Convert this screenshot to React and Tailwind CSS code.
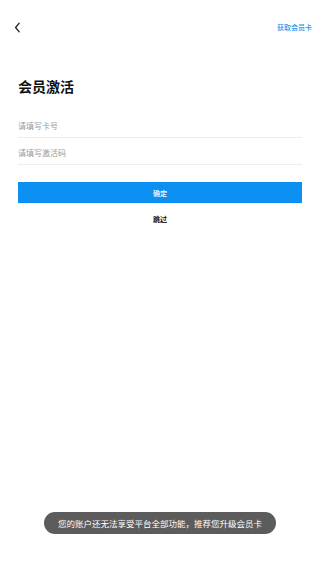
import React from 'react';

const font = { fontFamily: '"Noto Sans CJK SC", "Noto Sans", sans-serif' };

const App = () => {
    const [cardNo, setCardNo] = React.useState("");
    const [code, setCode] = React.useState("");

    return (
        <div className="relative w-full min-h-[569px] bg-white" style={font}>
            {/* Header */}
            <div className="h-[54px] flex items-center justify-between pl-[12px] pr-[8px]">
                <button className="w-[10px] h-[14px] flex items-center justify-center">
                    <svg width="7" height="11" viewBox="0 0 7 11" fill="none">
                        <path d="M5.2 1.2 L1.6 5.5 L5.2 9.8" stroke="#222" strokeWidth="1.3" strokeLinecap="round" strokeLinejoin="round" />
                    </svg>
                </button>
                <span className="text-[7px] leading-[10px] text-[#2b96ee] font-medium">获取会员卡</span>
            </div>

            {/* Form */}
            <div className="px-[18px]">
                <h1 className="mt-[22px] text-[14px] leading-[20px] font-bold text-[#111]">会员激活</h1>

                <div className="mt-[15px] h-[27px] pt-[4px] flex items-center border-b border-[#eeeeee]">
                    <input
                        type="text"
                        value={cardNo}
                        onChange={(e) => setCardNo(e.target.value)}
                        placeholder="请填写卡号"
                        className="w-full text-[8px] leading-[12px] text-[#333] placeholder-[#9a9a9a] outline-none bg-transparent"
                    />
                </div>
                <div className="h-[27px] pt-[4px] flex items-center border-b border-[#eeeeee]">
                    <input
                        type="text"
                        value={code}
                        onChange={(e) => setCode(e.target.value)}
                        placeholder="请填写激活码"
                        className="w-full text-[8px] leading-[12px] text-[#333] placeholder-[#9a9a9a] outline-none bg-transparent"
                    />
                </div>

                <button className="mt-[17px] w-full h-[21px] bg-[#0b90f1] text-white text-[7px] leading-[10px] font-medium flex items-center justify-center">
                    确定
                </button>
                <div className="mt-[8px] h-[16px] flex items-center justify-center text-[7px] text-[#111] font-bold">
                    跳过
                </div>
            </div>

            {/* Toast */}
            <div className="absolute left-[44px] top-[512px] w-[232px] h-[22px] rounded-full bg-[#5c5c5c] flex items-center justify-center">
                <span className="text-[8.5px] leading-[12px] text-white">您的账户还无法享受平台全部功能，推荐您升级会员卡</span>
            </div>
        </div>
    );
};

export default App;
